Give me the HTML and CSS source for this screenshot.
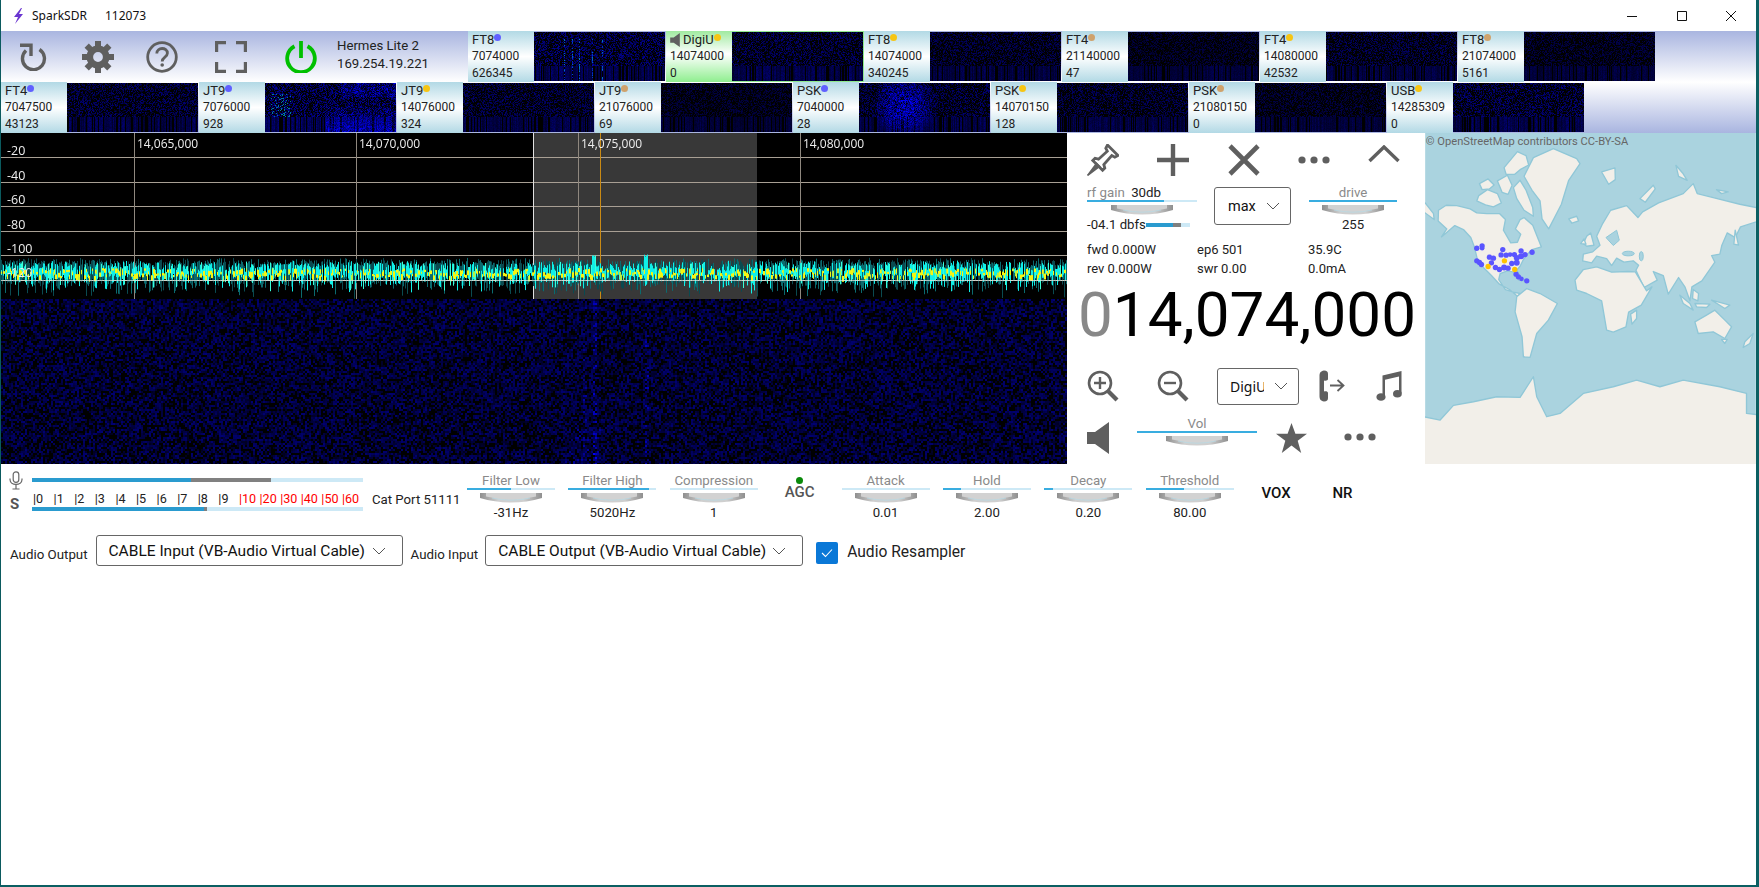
FILE: index.html
```html
<!DOCTYPE html>
<html lang="en">
<head>
<meta charset="utf-8">
<title>SparkSDR</title>
<link rel="stylesheet" href="styles.css">
</head>
<body>
<svg class="defs" width="0" height="0" aria-hidden="true">
  <defs>
    <linearGradient id="kg" x1="0" y1="0" x2="1" y2="0">
      <stop offset="0" stop-color="#8f8f8f"/><stop offset=".3" stop-color="#cfcfcf"/><stop offset=".7" stop-color="#cfcfcf"/><stop offset="1" stop-color="#8f8f8f"/>
    </linearGradient>
    <symbol id="knob" viewBox="0 0 62 10">
      <path d="M0 0H62V5Q31 14 0 5Z" fill="url(#kg)"/>
      <path d="M6 3.5Q31 9.5 56 3.5V0H6Z" fill="#d2d2d2"/>
      <path d="M12 5Q31 9.4 50 5" fill="none" stroke="#b5dbe8" stroke-width=".7"/>
    </symbol>
    <symbol id="chev" viewBox="0 0 14 8"><path d="M1 1L7 7L13 1" fill="none" stroke="#555" stroke-width="1"/></symbol>
    <symbol id="dots" viewBox="0 0 32 8"><circle cx="4" cy="4" r="3.6"/><circle cx="16" cy="4" r="3.6"/><circle cx="28" cy="4" r="3.6"/></symbol>
    <symbol id="speaker" viewBox="0 0 22 32"><path d="M0 10H8L22 0V32L8 22H0Z"/></symbol>
  </defs>
</svg>
<div class="window">
  <header class="titlebar">
    <svg class="bolt" width="12" height="16" viewBox="0 0 12 16"><path d="M9 0L2 9H6L3 16L11 6H7L10 0Z" fill="#6a35d0"/></svg>
    <span class="appname">SparkSDR</span>
    <span class="appid">112073</span>
    <div class="winbtns">
      <div class="winbtn"><svg width="12" height="12" viewBox="0 0 12 12"><path d="M1 6.5H11" stroke="#111"/></svg></div>
      <div class="winbtn"><svg width="12" height="12" viewBox="0 0 12 12"><path d="M1.5 1.5H10.5V10.5H1.5Z" fill="none" stroke="#111"/></svg></div>
      <div class="winbtn"><svg width="12" height="12" viewBox="0 0 12 12"><path d="M1 1L11 11M11 1L1 11" stroke="#111"/></svg></div>
    </div>
  </header>

  <section class="top">
    <div class="row">
      <div class="toolbar">
        <div class="tool"><svg width="28" height="28" viewBox="0 0 28 28"><path d="M20.5 6.5A11 11 0 1 1 7 7.6" fill="none" stroke="#5f5f5f" stroke-width="3.4"/><path d="M1 2.2H12V13" fill="none" stroke="#5f5f5f" stroke-width="3.4"/></svg></div>
        <div class="tool"><svg width="32" height="32" viewBox="-16 -16 32 32" fill="#5f5f5f">
          <circle r="8.2" fill="none" stroke="#5f5f5f" stroke-width="6.6"/>
          <g id="tooth"><rect x="-3" y="-16" width="6" height="6"/></g>
          <use href="#tooth" transform="rotate(45)"/><use href="#tooth" transform="rotate(90)"/><use href="#tooth" transform="rotate(135)"/><use href="#tooth" transform="rotate(180)"/><use href="#tooth" transform="rotate(225)"/><use href="#tooth" transform="rotate(270)"/><use href="#tooth" transform="rotate(315)"/>
        </svg></div>
        <div class="tool"><svg width="32" height="32" viewBox="0 0 32 32"><circle cx="16" cy="16" r="14.3" fill="none" stroke="#5f5f5f" stroke-width="2.8"/><path d="M10.8 12.4C10.8 5.8 21.4 6 21.4 12.2C21.4 16.2 16.2 16 16.2 20.4" fill="none" stroke="#5f5f5f" stroke-width="2.8"/><circle cx="16.2" cy="24" r="1.8" fill="#5f5f5f"/></svg></div>
        <div class="tool"><svg width="32" height="32" viewBox="0 0 32 32"><path d="M1.6 11V1.6H11M21 1.6H30.4V11M30.4 21V30.4H21M11 30.4H1.6V21" fill="none" stroke="#5f5f5f" stroke-width="3.2"/></svg></div>
        <div class="tool"><svg width="32" height="32" viewBox="0 0 32 32"><path d="M9.5 5.2A13.8 13.8 0 1 0 22.5 5.2" fill="none" stroke="#00c000" stroke-width="3.8"/><path d="M16 0V17" stroke="#00c000" stroke-width="3.8"/></svg></div>
        <div class="radio"><div>Hermes Lite 2</div><div>169.254.19.221</div></div>
      </div>
      <div class="tile"><div class="tlabel"><div class="tmode">FT8<i class="dot blue"></i></div><div>7074000</div><div>626345</div></div><canvas class="twf" width="131" height="49" data-seed="11" data-level="1.1" data-hot="ticks"></canvas></div>
      <div class="tile active"><div class="tlabel"><div class="tmode"><svg class="tspk" width="10" height="14"><use href="#speaker"/></svg>DigiU<i class="dot yellow"></i></div><div>14074000</div><div>0</div></div><canvas class="twf" width="131" height="49" data-seed="12" data-level=".9"></canvas></div>
      <div class="tile"><div class="tlabel"><div class="tmode">FT8<i class="dot yellow"></i></div><div>14074000</div><div>340245</div></div><canvas class="twf" width="131" height="49" data-seed="13" data-level=".75"></canvas></div>
      <div class="tile"><div class="tlabel"><div class="tmode">FT4<i class="dot tan"></i></div><div>21140000</div><div>47</div></div><canvas class="twf" width="131" height="49" data-seed="14" data-level=".55"></canvas></div>
      <div class="tile"><div class="tlabel"><div class="tmode">FT4<i class="dot yellow"></i></div><div>14080000</div><div>42532</div></div><canvas class="twf" width="131" height="49" data-seed="15" data-level=".8"></canvas></div>
      <div class="tile"><div class="tlabel"><div class="tmode">FT8<i class="dot tan"></i></div><div>21074000</div><div>5161</div></div><canvas class="twf" width="131" height="49" data-seed="16" data-level=".6"></canvas></div>
    </div>
    <div class="row">
      <div class="tile"><div class="tlabel"><div class="tmode">FT4<i class="dot blue"></i></div><div>7047500</div><div>43123</div></div><canvas class="twf" width="131" height="49" data-seed="21" data-level=".9"></canvas></div>
      <div class="tile"><div class="tlabel"><div class="tmode">JT9<i class="dot blue"></i></div><div>7076000</div><div>928</div></div><canvas class="twf" width="131" height="49" data-seed="22" data-level="1.2" data-hot="band"></canvas></div>
      <div class="tile"><div class="tlabel"><div class="tmode">JT9<i class="dot yellow"></i></div><div>14076000</div><div>324</div></div><canvas class="twf" width="131" height="49" data-seed="23" data-level=".85"></canvas></div>
      <div class="tile"><div class="tlabel"><div class="tmode">JT9<i class="dot tan"></i></div><div>21076000</div><div>69</div></div><canvas class="twf" width="131" height="49" data-seed="24" data-level=".55"></canvas></div>
      <div class="tile"><div class="tlabel"><div class="tmode">PSK<i class="dot blue"></i></div><div>7040000</div><div>28</div></div><canvas class="twf" width="131" height="49" data-seed="25" data-level=".9" data-hot="blob"></canvas></div>
      <div class="tile"><div class="tlabel"><div class="tmode">PSK<i class="dot yellow"></i></div><div>14070150</div><div>128</div></div><canvas class="twf" width="131" height="49" data-seed="26" data-level=".8"></canvas></div>
      <div class="tile"><div class="tlabel"><div class="tmode">PSK<i class="dot tan"></i></div><div>21080150</div><div>0</div></div><canvas class="twf" width="131" height="49" data-seed="27" data-level=".6"></canvas></div>
      <div class="tile"><div class="tlabel"><div class="tmode">USB<i class="dot yellow"></i></div><div>14285309</div><div>0</div></div><canvas class="twf" width="131" height="49" data-seed="28" data-level="1"></canvas></div>
    </div>
  </section>

  <section class="main">
    <div class="scope">
      <canvas id="scope" width="1066" height="331"></canvas>
      <span class="fl f1">14,065,000</span><span class="fl f2">14,070,000</span><span class="fl f3">14,075,000</span><span class="fl f4">14,080,000</span>
      <span class="db d1">-20</span><span class="db d2">-40</span><span class="db d3">-60</span><span class="db d4">-80</span><span class="db d5">-100</span><span class="db d6">-120</span>
    </div>

    <div class="panel">
      <div class="iconrow">
        <svg width="32" height="32" viewBox="0 0 32 32" fill="#5f5f5f"><path d="M20.5 1L31 11.5L27.8 13.2L24.8 11.6L16.8 20.5L17.8 24L15.6 26.2L5.8 16.4L8 14.2L11.5 15.2L20.3 7.2L18.8 4.2Z" fill="none" stroke="#5f5f5f" stroke-width="2.8"/><path d="M1 31L9.5 19.5L12.5 22.5Z M0.5 31.5L9 21.5L10.5 23Z" stroke="#5f5f5f" stroke-width="1.6"/></svg>
        <svg width="32" height="32" viewBox="0 0 32 32"><path d="M16 0V32M0 16H32" stroke="#5f5f5f" stroke-width="4.4"/></svg>
        <svg width="32" height="32" viewBox="0 0 32 32"><path d="M2 2L30 30M30 2L2 30" stroke="#5f5f5f" stroke-width="4.6"/></svg>
        <svg class="fill" width="32" height="8"><use href="#dots"/></svg>
        <svg class="chevup" width="32" height="18" viewBox="0 0 32 18"><path d="M1.5 16L16 2L30.5 16" fill="none" stroke="#5f5f5f" stroke-width="3.4"/></svg>
      </div>

      <div class="gainrow">
        <div class="gaincol">
          <div class="sl-label left"><span>rf gain</span> <b>30db</b></div>
          <div class="track"><div class="fillbar w70"></div></div>
          <svg class="knob" width="62" height="10"><use href="#knob"/></svg>
          <div class="dbfs"><span>-04.1 dbfs</span><div class="minimeter"><i class="mb"></i><i class="mg"></i></div></div>
        </div>
        <div class="select smax"><span>max</span><svg width="14" height="8"><use href="#chev"/></svg></div>
        <div class="drive">
          <div class="sl-label">drive</div>
          <div class="track"><div class="fillbar w100"></div></div>
          <svg class="knob" width="62" height="10"><use href="#knob"/></svg>
          <div class="val">255</div>
        </div>
      </div>

      <div class="stats">
        <span>fwd 0.000W</span><span>ep6 501</span><span>35.9C</span>
        <span>rev 0.000W</span><span>swr 0.00</span><span>0.0mA</span>
      </div>

      <div class="freq"><span class="lead">0</span>14,074,000</div>

      <div class="toolrow">
        <svg class="c1" width="32" height="32" viewBox="0 0 32 32"><circle cx="13" cy="13" r="11" fill="none" stroke="#5f5f5f" stroke-width="2.6"/><path d="M7 13H19M13 7V19" stroke="#5f5f5f" stroke-width="2.4"/><path d="M21 21L30 30" stroke="#5f5f5f" stroke-width="4.2"/></svg>
        <svg class="c2" width="32" height="32" viewBox="0 0 32 32"><circle cx="13" cy="13" r="11" fill="none" stroke="#5f5f5f" stroke-width="2.6"/><path d="M7 13H19" stroke="#5f5f5f" stroke-width="2.4"/><path d="M21 21L30 30" stroke="#5f5f5f" stroke-width="4.2"/></svg>
        <div class="select smode"><span>DigiU</span><svg width="14" height="8"><use href="#chev"/></svg></div>
        <svg class="c3" width="26" height="32" viewBox="0 0 26 32"><path d="M5 0.5C1.5 1 0.5 3 0.5 6V26C0.5 29 1.5 31 5 31.5C8 31.5 9 30 9 28V23C9 21.5 7 21 5 21.5V10.5C7 11 9 10.5 9 9V4C9 2 8 0.5 5 0.5Z" fill="#5f5f5f"/><path d="M11 15.5H24M18.5 10L24.5 15.5L18.5 21" fill="none" stroke="#5f5f5f" stroke-width="1.8"/></svg>
        <svg class="c4" width="26" height="32" viewBox="0 0 26 32" fill="#5f5f5f"><path d="M6.5 5.5L25.5 1V23.5H23V6.5L9 9.8V27H6.5Z"/><ellipse cx="5" cy="27" rx="4.6" ry="3.8"/><ellipse cx="21.4" cy="23.8" rx="4.4" ry="3.8"/></svg>
      </div>

      <div class="volrow">
        <svg class="fill spk" width="22" height="32"><use href="#speaker"/></svg>
        <div class="vol">
          <div class="sl-label">Vol</div>
          <div class="track"><div class="fillbar w100"></div></div>
          <svg class="knob" width="62" height="10"><use href="#knob"/></svg>
        </div>
        <svg class="star" width="31" height="30" viewBox="0 0 31 30"><path d="M15.5 0L19.4 10.8H31L21.7 17.8L25.2 30L15.5 22.6L5.8 30L9.3 17.8L0 10.8H11.6Z" fill="#5f5f5f"/></svg>
        <svg class="fill dotsb" width="32" height="8"><use href="#dots"/></svg>
      </div>
    </div>

    <div class="map">
      <svg width="331" height="331" viewBox="15 8 993 994">
        <rect x="15" y="8" width="993" height="994" fill="#aad3df"/>
        <g fill="#f2efe9" stroke="#90c7d7" stroke-width="4" stroke-linejoin="round">
          <path d="M0 215L15 218L40 250L42 268L15 248L0 245Z"/>
          <path d="M55 240L78 225L110 226L150 236L170 248L200 250L238 250L256 268L250 300L272 338L292 336L302 312L286 296L300 268L312 262L338 285L352 320L364 350L336 358L322 372L310 388L300 408L290 420L302 442L314 452L296 450L282 426L262 422L240 430L236 448L256 478L280 486L300 490L292 498L268 478L238 462L214 436L190 412L172 388L162 348L152 322L130 298L104 286L64 320L80 296L54 272Z"/>
          <path d="M170 212L176 196L202 178L232 190L244 218L220 230L196 224Z"/>
          <path d="M178 160L204 146L222 164L208 176L186 178Z"/>
          <path d="M232 152L262 135L276 165L264 192L246 186Z"/>
          <path d="M252 112L292 64L318 76L326 104L300 118L284 132L258 132Z"/>
          <path d="M280 172L300 150L318 180L338 232L340 258L312 240L290 205Z"/>
          <path d="M312 138L340 82L400 55L470 85L480 100L446 150L424 222L386 296L366 266L360 212L336 180Z"/>
          <path d="M446 266L470 258L476 272L456 279Z"/>
          <path d="M490 340L500 318L512 308L522 345L500 348Z"/>
          <path d="M482 340L492 326L498 342Z"/>
          <path d="M545 125L585 113L586 148L566 162Z"/>
          <path d="M768 105L788 128L802 150L776 138Z"/>
          <path d="M660 205L700 165L706 176L676 216Z"/>
          <path d="M890 178L925 185L905 190Z"/>
          <path d="M488 392L490 372L518 365L540 345L530 318L548 280L572 240L620 226L654 262L668 245L716 218L790 190L820 160L832 190L880 202L960 222L1030 236V268L962 290L946 322L922 308L906 345L900 372L875 376L885 396L860 432L846 452L816 470L810 512L795 470L776 442L745 492L730 436L700 424L712 450L672 472L648 420L656 405L640 392L612 396L590 384L575 406L560 385L530 378L515 398Z"/>
          <path d="M946 300L956 345L942 342Z"/>
          <path d="M465 450L490 418L530 410L575 426L625 424L646 425L680 482L696 470L664 525L626 546L618 590L580 606L560 600L545 512L500 490L470 480Z"/>
          <path d="M632 552L650 540L650 565L636 582Z"/>
          <path d="M290 500L320 475L360 490L412 520L385 570L350 610L330 682L310 680L306 620L285 545Z"/>
          <path d="M825 575L860 555L885 540L915 570L935 590L915 625L880 605L835 610Z"/>
          <path d="M780 495L810 520L820 540L790 520Z"/>
          <path d="M825 520L870 522L860 532L830 530Z"/>
          <path d="M875 510L930 525L915 535Z"/>
          <path d="M975 635L1000 610L990 640L970 652Z"/>
          <path d="M820 478L836 490L834 512L818 505Z"/>
          <path d="M905 628L922 628L915 640Z"/>
          <path d="M0 858L60 870L100 826L160 815L230 800L300 802L340 740L350 800L380 860L420 850L490 790L580 770L650 750L720 770L790 750L900 770L980 790L980 850L1030 856V1030H0Z"/>
        </g>
        <g fill="#aad3df" stroke="#90c7d7" stroke-width="3">
          <ellipse cx="625" cy="370" rx="18" ry="7"/>
          <ellipse cx="664" cy="378" rx="6" ry="14"/>
          <path d="M558 322L590 300L598 330L580 346Z"/>
        </g>
        <g fill="#5a55ff">
          <circle cx="170" cy="354" r="8"/><circle cx="186" cy="347" r="8"/><circle cx="186" cy="354" r="7"/>
          <circle cx="170" cy="392" r="8"/><circle cx="178" cy="397" r="8"/><circle cx="184" cy="403" r="8"/>
          <circle cx="208" cy="381" r="8"/><circle cx="220" cy="384" r="8"/><circle cx="214" cy="398" r="8"/>
          <circle cx="248" cy="358" r="8"/><circle cx="243" cy="374" r="8"/><circle cx="258" cy="375" r="8"/><circle cx="270" cy="373" r="7"/><circle cx="283" cy="373" r="8"/>
          <circle cx="290" cy="383" r="9"/><circle cx="303" cy="362" r="8"/><circle cx="303" cy="378" r="9"/><circle cx="315" cy="373" r="8"/><circle cx="336" cy="366" r="8"/>
          <circle cx="275" cy="400" r="8"/><circle cx="290" cy="398" r="9"/><circle cx="226" cy="412" r="8"/><circle cx="238" cy="418" r="8"/><circle cx="252" cy="412" r="9"/><circle cx="264" cy="414" r="8"/>
          <circle cx="288" cy="432" r="8"/><circle cx="295" cy="440" r="8"/><circle cx="304" cy="446" r="7"/><circle cx="320" cy="452" r="8"/>
        </g>
        <g fill="#ffc400">
          <circle cx="204" cy="409" r="8"/><circle cx="253" cy="392" r="8"/><circle cx="284" cy="418" r="8"/>
        </g>
        <text class="osm" x="17" y="44">© OpenStreetMap contributors CC-BY-SA</text>
      </svg>
    </div>
  </section>

  <section class="lower">
    <div class="iconcol">
      <svg width="14" height="19" viewBox="0 0 14 19" fill="none" stroke="#666" stroke-width="1.2"><rect x="4.2" y=".8" width="5.6" height="10.6" rx="2.8"/><path d="M1 7.5V8.5C1 15 13 15 13 8.5V7.5M7 13.5V18M3.5 18H10.5"/></svg>
      <b class="s">S</b>
    </div>
    <div class="meters">
      <div class="bar"><i class="b159"></i><i class="g80"></i></div>
      <div class="scale"><span>|0</span><span>|1</span><span>|2</span><span>|3</span><span>|4</span><span>|5</span><span>|6</span><span>|7</span><span>|8</span><span>|9</span><span class="red">|10</span><span class="red">|20</span><span class="red">|30</span><span class="red">|40</span><span class="red">|50</span><span class="red">|60</span></div>
      <div class="bar"><i class="b172"></i><i class="g3"></i></div>
    </div>
    <div class="cat">Cat Port 51111</div>
    <div class="sliders">
      <div class="sl"><div class="sl-label">Filter Low</div><div class="track"><div class="fillbar w50"></div></div><svg class="knob" width="62" height="10"><use href="#knob"/></svg><div class="val">-31Hz</div></div>
      <div class="sl"><div class="sl-label">Filter High</div><div class="track"><div class="fillbar w92"></div></div><svg class="knob" width="62" height="10"><use href="#knob"/></svg><div class="val">5020Hz</div></div>
      <div class="sl"><div class="sl-label">Compression</div><div class="track"></div><svg class="knob" width="62" height="10"><use href="#knob"/></svg><div class="val">1</div></div>
      <div class="agc"><i class="led"></i><b>AGC</b></div>
      <div class="sl"><div class="sl-label">Attack</div><div class="track"></div><svg class="knob" width="62" height="10"><use href="#knob"/></svg><div class="val">0.01</div></div>
      <div class="sl"><div class="sl-label">Hold</div><div class="track"><div class="fillbar w20"></div></div><svg class="knob" width="62" height="10"><use href="#knob"/></svg><div class="val">2.00</div></div>
      <div class="sl"><div class="sl-label">Decay</div><div class="track"><div class="fillbar w10"></div></div><svg class="knob" width="62" height="10"><use href="#knob"/></svg><div class="val">0.20</div></div>
      <div class="sl"><div class="sl-label">Threshold</div><div class="track"><div class="fillbar w44"></div></div><svg class="knob" width="62" height="10"><use href="#knob"/></svg><div class="val">80.00</div></div>
      <b class="tbtn vox">VOX</b>
      <b class="tbtn nr">NR</b>
    </div>
  </section>

  <section class="audio">
    <span class="alabel">Audio Output</span>
    <div class="select sout"><span>CABLE Input (VB-Audio Virtual Cable)</span><svg width="14" height="8"><use href="#chev"/></svg></div>
    <span class="alabel">Audio Input</span>
    <div class="select sin"><span>CABLE Output (VB-Audio Virtual Cable)</span><svg width="14" height="8"><use href="#chev"/></svg></div>
    <div class="check"><svg width="12" height="10" viewBox="0 0 12 10"><path d="M1 5L4.5 8.5L11 1.5" fill="none" stroke="#fff" stroke-width="1.1"/></svg></div>
    <span class="resampler">Audio Resampler</span>
  </section>
</div>
<script src="app.js"></script>
</body>
</html>
```
FILE: styles.css
```css
* { box-sizing: border-box; }
html, body { margin: 0; padding: 0; background: #fff; overflow: hidden; }
body { width: 1759px; height: 887px; font-family: Roboto, "Liberation Sans", sans-serif; font-size: 12px; color: #111; }
.defs { position: absolute; }
canvas { display: block; }
svg { display: block; }

.window { width: 1759px; height: 887px; border-left: 1px solid #0b5a5e; border-right: 3px solid #0b5f62; border-bottom: 2px solid #0b5f62; background: #fff; }

.titlebar { height: 31px; display: flex; align-items: center; font-family: "Noto Sans", sans-serif; font-size: 12px; color: #111; padding-left: 11px; }
.bolt { margin-right: 8px; }
.appname { width: 73px; }
.winbtns { margin-left: auto; display: flex; }
.winbtn { width: 49.5px; height: 31px; display: flex; align-items: center; justify-content: center; }

.top { height: 102px; background: linear-gradient(#a9b5e0, #fff 50%, #a9b5e0); }
.row { display: flex; height: 51px; }
.toolbar { width: 467px; display: grid; grid-template-columns: 64px 66px 62px 76px 64px 1fr; align-items: center; }
.tool { display: flex; justify-content: center; align-items: center; }
.radio { padding-left: 4px; font-size: 13.2px; line-height: 18px; color: #222; margin-top: -3px; }

.tile { width: 198px; display: flex; flex: none; }
.tlabel { width: 66px; flex: none; padding: 1px 0 0 4px; font-size: 12px; line-height: 16.4px; color: #222; background: linear-gradient(#b2d9e5, #fff 50%, #b2d9e5); }
.tmode { display: flex; align-items: flex-start; height: 16.4px; font-size: 13px; }
.tspk { fill: #5f5f5f; margin-right: 3px; margin-top: 1px; }
.dot { width: 7px; height: 7px; border-radius: 50%; margin-top: 2px; }
.blue { background: #6060ff; }
.yellow { background: #f6c514; }
.tan { background: #cfa26c; }
.twf { width: 131px; height: 49px; margin: 1px 0 1px 0; }
.active .tlabel { background: linear-gradient(#a0eaa0, #fff 45%, #8fee8f); }
.active { box-shadow: inset 0 0 0 1px #8fe88f; }

.main { display: flex; height: 331px; }
.scope { width: 1066px; height: 331px; position: relative; background: #000; overflow: hidden; }
.fl { position: absolute; top: 3px; color: #eee; font-family: "Open Sans", sans-serif; font-size: 12px; line-height: 16px; }
.f1 { left: 136px; } .f2 { left: 358px; } .f3 { left: 580px; } .f4 { left: 802px; }
.db { position: absolute; left: 6px; color: #eee; font-family: "Open Sans", sans-serif; font-size: 12.5px; line-height: 16px; }
.d1 { top: 10px; } .d2 { top: 34.5px; } .d3 { top: 59px; } .d4 { top: 83.5px; } .d5 { top: 108px; } .d6 { top: 132px; }

.panel { width: 358px; height: 331px; flex: none; }
.iconrow { display: grid; grid-template-columns: repeat(5, 70.3px); height: 53px; align-items: center; justify-items: center; margin-left: 1px; }
.chevup { margin-bottom: 12px; }
.fill { fill: #5f5f5f; }

.sl-label { color: #8a8a8a; font-size: 13.3px; line-height: 14px; text-align: center; white-space: nowrap; }
.sl-label.left { text-align: left; }
.sl-label b { font-weight: 400; color: #222; margin-left: 3px; }
.track { height: 2px; background: #cde9f6; position: relative; }
.fillbar { height: 100%; background: #39ade0; }
.w100 { width: 100%; } .w70 { width: 70%; } .w50 { width: 50%; } .w92 { width: 92%; } .w20 { width: 20%; } .w10 { width: 10%; } .w44 { width: 44%; }
.knob { margin: 3px auto 0; }
.val { text-align: center; font-size: 13.2px; line-height: 14px; margin-top: 3px; color: #222; }

.gainrow { display: flex; align-items: flex-start; padding-left: 20px; height: 55px; }
.gaincol { width: 110px; }
.dbfs { display: flex; align-items: center; font-size: 13.2px; line-height: 14px; margin-top: 3px; color: #222; white-space: nowrap; }
.minimeter { width: 44px; height: 4px; background: #cde9f6; display: flex; flex: none; }
.mb { width: 27px; background: #2a9bcf; } .mg { width: 8px; background: #808080; }
.select { border: 1px solid #666; border-radius: 3px; display: flex; align-items: center; background: #fff; color: #111; }
.select svg { flex: none; margin-left: auto; }
.smax { width: 77px; height: 38px; margin: 1px 0 0 17px; padding: 0 10px 0 13px; font-size: 14.5px; }
.drive { width: 88px; margin-left: 18px; }

.stats { display: grid; grid-template-columns: 110px 111px 1fr; padding-left: 20px; font-size: 13px; line-height: 17px; color: #222; height: 38px; }
.freq { font-size: 62px; line-height: 72px; height: 72px; padding-left: 11px; color: #000; white-space: nowrap; }
.lead { color: #888; }

.toolrow { display: flex; align-items: center; height: 42px; margin-top: 14px; padding-left: 20px; }
.c2 { margin-left: 38px; }
.smode { width: 82px; height: 37px; margin-left: 28px; padding: 0 10px 0 12px; font-size: 14px; font-family: "Noto Sans", sans-serif; }
.smode span { width: 34px; overflow: hidden; white-space: clip; }
.c3 { margin-left: 20px; }
.c4 { margin-left: 31px; }

.volrow { display: flex; align-items: flex-start; padding: 10px 0 0 20px; }
.spk { margin-top: 5px; }
.vol { width: 120px; margin-left: 28px; }
.star { margin: 6px 0 0 19px; }
.dotsb { margin: 16px 0 0 37px; }

.map { width: 331px; height: 331px; flex: none; overflow: hidden; }
.osm { font-family: Roboto, sans-serif; font-size: 33.5px; fill: #666; stroke: none; }

.lower { display: flex; height: 71px; align-items: flex-start; }
.iconcol { width: 31px; padding: 7px 0 0 8px; }
.s { display: block; font-size: 15px; color: #555; margin: 7px 0 0 1px; line-height: 14px; }
.meters { width: 331px; padding-top: 14px; }
.bar { height: 4px; background: #cde9f6; display: flex; }
.b159 { width: 159px; background: #2a9bcf; } .g80 { width: 80px; background: #808080; }
.b172 { width: 172px; background: #2a9bcf; } .g3 { width: 3px; background: #808080; }
.scale { display: flex; height: 25px; align-items: center; font-size: 12.6px; padding: 8px 0 0 1px; color: #222; }
.scale span { width: 20.6px; flex: none; }
.red { color: #f00; }
.cat { width: 104px; padding: 29px 0 0 9px; font-size: 13.2px; line-height: 14px; color: #222; white-space: nowrap; }
.sliders { display: flex; gap: 13.4px; padding-top: 10px; }
.sl { width: 88px; }
.agc { width: 57px; text-align: center; color: #555; font-size: 15px; }
.led { display: block; width: 7px; height: 7px; border-radius: 50%; background: #0a8a0a; margin: 3px auto 0; }
.agc b { display: block; line-height: 14px; margin-top: 1px; font-weight: 500; }
.tbtn { text-align: center; font-size: 15px; line-height: 16px; margin-top: 11px; color: #111; font-weight: 500; }
.vox { width: 58px; } .nr { width: 48px; }

.audio { display: flex; align-items: center; height: 31px; padding-left: 9px; }
.alabel { font-size: 13.3px; margin-top: 8px; color: #222; white-space: nowrap; }
.sout { width: 307px; height: 31px; margin: 0 8px 0 8px; padding: 0 16px 0 12px; font-size: 15.5px; white-space: nowrap; }
.sin { width: 318px; height: 31px; margin-left: 7px; padding: 0 16px 0 12px; font-size: 15.5px; white-space: nowrap; }
.check { width: 22px; height: 22px; margin: 4px 0 0 13px; border-radius: 2px; background: #0a78d7; display: flex; align-items: center; justify-content: center; }
.resampler { font-size: 15.6px; margin: 2px 0 0 9px; color: #222; }
```
FILE: app.js
```js
function rng(seed) {
  var s = seed * 2654435761 >>> 0;
  return function () {
    s = (s + 0x6D2B79F5) >>> 0;
    var t = Math.imul(s ^ (s >>> 15), 1 | s);
    t = (t + Math.imul(t ^ (t >>> 7), 61 | t)) ^ t;
    return ((t ^ (t >>> 14)) >>> 0) / 4294967296;
  };
}

function px(d, w, x, y, r, g, b) {
  var i = (y * w + x) * 4;
  d[i] = r; d[i + 1] = g; d[i + 2] = b; d[i + 3] = 255;
}

/* small band-overview waterfalls */
document.querySelectorAll('.twf').forEach(function (c) {
  var w = c.width, h = c.height, ctx = c.getContext('2d');
  var R = rng(+c.dataset.seed), level = +c.dataset.level, hot = c.dataset.hot;
  var img = ctx.createImageData(w, h), d = img.data;
  var cols = [];
  for (var x = 0; x < w; x++) cols.push(R());
  for (var y = 0; y < h; y++) {
    for (x = 0; x < w; x++) {
      var v = R(), b = v < .45 ? 0 : (30 + (v - .45) * 190) * level;
      if (y >= 34) {
        var q = cols[x];
        b = (q < .22 ? 0 : 35 + q * 70 * level) * (.75 + R() * .4);
      }
      var g = 0;
      if (hot === 'blob') {
        var dx = (x - 45) / 32, dy = (y - 22) / 26;
        var k = Math.max(0, 1 - dx * dx - dy * dy * .6);
        b = Math.min(255, b + k * R() * 200);
      }
      if (hot === 'band') {
        var k2 = y > 18 && x > 60 ? (y - 18) / 31 : (y < 14 && x > 75 ? .6 : 0);
        b = Math.min(255, b + k2 * R() * 170);
        if (x > 5 && x < 26 && y > 10 && y < 34 && R() < .12) { g = 120; b = 160; }
      }
      if (hot === 'ticks' && (x === 30 || x === 38 || x === 45 || x === 58 || x === 68) && y > 6 && R() < .5) {
        g = R() * 130; b = 190;
      }
      px(d, w, x, y, 0, g, b);
    }
  }
  ctx.putImageData(img, 0, 0);
});

/* main spectrum + waterfall */
(function () {
  var c = document.getElementById('scope'), ctx = c.getContext('2d');
  var W = c.width, H = c.height, top = 133, R = rng(77);
  var Y = function (v) { return v - top; }, X = function (v) { return v - 1; };
  var wfTop = Y(299);

  ctx.fillStyle = '#000'; ctx.fillRect(0, 0, W, H);
  ctx.fillStyle = '#383838'; ctx.fillRect(X(533), 0, 224, wfTop);

  /* grid */
  ctx.fillStyle = '#a89f94';
  [157, 181.5, 206, 230.5, 255, 279.5].forEach(function (y) { ctx.fillRect(0, Math.round(Y(y)), W, 1); });
  ctx.fillStyle = '#8f887f';
  [134, 356, 578, 800].forEach(function (x) { ctx.fillRect(X(x), 0, 1, wfTop); });
  ctx.fillStyle = '#e0e0e0'; ctx.fillRect(X(533), 0, 1, wfTop);
  ctx.fillStyle = '#c98a14'; ctx.fillRect(X(600), 0, 1, wfTop);

  /* trace: dim hold, cyan body, yellow core */
  var x, base;
  for (x = 0; x < W; x++) {
    base = Y(273) + (R() - .5) * 3;
    if (R() < .8) {
      var upDim = 7 + R() * 7, dnDim = 6 + R() * R() * 20;
      ctx.fillStyle = R() < .5 ? '#0b6a6e' : '#0a4a50';
      ctx.fillRect(x, base - upDim, 1, upDim + dnDim);
    }
  }
  for (x = 0; x < W; x++) {
    base = Y(273) + (R() - .5) * 3;
    var abs = x + 1;
    var upC = 2 + R() * 9, dnC = 1 + R() * R() * 20;
    if (abs >= 592 && abs <= 595) upC = 17;
    if (abs >= 644 && abs <= 647) upC = 18;
    if (R() < .72 || upC > 16) {
      ctx.fillStyle = R() < .8 ? '#10f0e8' : '#3affd8';
      ctx.fillRect(x, base - upC, 1, upC + dnC);
    }
  }
  for (x = 0; x < W; x += 1 + Math.floor(R() * 3)) {
    base = Y(273);
    ctx.fillStyle = R() < .85 ? '#f6f612' : '#b8f040';
    ctx.fillRect(x, base - 5 + R() * 8, 1 + Math.round(R()), 2 + R() * 4);
  }
  ctx.fillStyle = 'rgba(235,235,225,.7)';
  ctx.fillRect(0, Math.round(Y(279.5)), W, 1);

  /* waterfall */
  var h = H - wfTop, img = ctx.createImageData(W, h), d = img.data;
  var cw = Math.ceil(W / 2), ch = Math.ceil(h / 2);
  for (var cy = 0; cy < ch; cy++) {
    for (var cx = 0; cx < cw; cx++) {
      var v = R(), b = v < .36 ? 0 : 30 + (v - .36) * 130;
      var ax = cx * 2 + 1;
      if (ax >= 582 && ax <= 585 && R() < .25) b += 60;
      if (ax >= 592 && ax <= 595 && R() < .35) b += 90;
      if (ax >= 644 && ax <= 647 && R() < .3) b += 80;
      if (ax >= 565 && ax <= 600 && cy * 2 > 128 && R() < .3) b += 50;
      b = Math.min(255, b);
      for (var j = 0; j < 2; j++) for (var i = 0; i < 2; i++) {
        if (cx * 2 + i < W && cy * 2 + j < h) px(d, W, cx * 2 + i, cy * 2 + j, 0, 0, b);
      }
    }
  }
  ctx.putImageData(img, 0, wfTop);
})();
```
